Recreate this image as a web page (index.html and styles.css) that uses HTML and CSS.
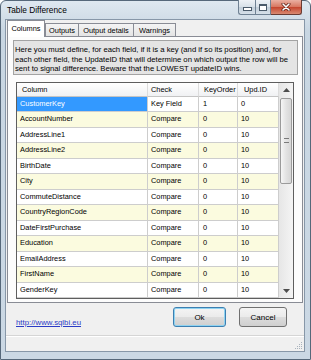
FILE: index.html
```html
<!DOCTYPE html>
<html lang="en">
  <head>
    <meta charset="UTF-8" />
    <meta name="viewport" content="width=device-width, initial-scale=1.0" />
    <title>Table Difference</title>
    <link rel="stylesheet" href="styles.css">
  </head>

  <body>
    <div class="window">
      <div class="titlebar">
        <span class="title">Table Difference</span>
        <div class="caption-buttons">
          <span class="cap-btn cap-min"><i></i></span>
          <span class="cap-btn cap-max"><i></i></span>
          <span class="cap-btn cap-close">
            <svg width="10" height="8" viewBox="0 0 10 8">
              <path d="M2 1 L8 7 M8 1 L2 7" stroke="#5a1a10" stroke-width="3" stroke-linecap="round" />
              <path d="M2 1 L8 7 M8 1 L2 7" stroke="#ffffff" stroke-width="1.6" stroke-linecap="round" />
            </svg>
          </span>
        </div>
      </div>

      <div class="client">
        <div class="tabs">
          <div class="tab selected">Columns</div>
          <div class="tab tab-outputs">Outputs</div>
          <div class="tab tab-details">Output details</div>
          <div class="tab tab-warnings">Warnings</div>
        </div>

        <div class="tab-page">
          <div class="description">
            Here you must define, for each field, if it is a key (and if so its position) and, for<br>
            each other field, the UpdateID that will determine on which output the row will be<br>
            sent to signal difference. Beware that the LOWEST updateID wins.
          </div>

          <div class="grid">
            <div class="grid-body">
              <div class="grid-row header">
                <div class="h-col">Column</div>
                <div class="h-check">Check</div>
                <div class="h-key">KeyOrder</div>
                <div class="h-upd">Upd.ID</div>
              </div>
              <div class="grid-row">
                <div class="cell-selected">CustomerKey</div><div>Key Field</div><div class="num">1</div><div>0</div>
              </div>
              <div class="grid-row alt">
                <div>AccountNumber</div><div>Compare</div><div class="num">0</div><div>10</div>
              </div>
              <div class="grid-row">
                <div>AddressLine1</div><div>Compare</div><div class="num">0</div><div>10</div>
              </div>
              <div class="grid-row alt">
                <div>AddressLine2</div><div>Compare</div><div class="num">0</div><div>10</div>
              </div>
              <div class="grid-row">
                <div>BirthDate</div><div>Compare</div><div class="num">0</div><div>10</div>
              </div>
              <div class="grid-row alt">
                <div>City</div><div>Compare</div><div class="num">0</div><div>10</div>
              </div>
              <div class="grid-row">
                <div>CommuteDistance</div><div>Compare</div><div class="num">0</div><div>10</div>
              </div>
              <div class="grid-row alt">
                <div>CountryRegionCode</div><div>Compare</div><div class="num">0</div><div>10</div>
              </div>
              <div class="grid-row">
                <div>DateFirstPurchase</div><div>Compare</div><div class="num">0</div><div>10</div>
              </div>
              <div class="grid-row alt">
                <div>Education</div><div>Compare</div><div class="num">0</div><div>10</div>
              </div>
              <div class="grid-row">
                <div>EmailAddress</div><div>Compare</div><div class="num">0</div><div>10</div>
              </div>
              <div class="grid-row alt">
                <div>FirstName</div><div>Compare</div><div class="num">0</div><div>10</div>
              </div>
              <div class="grid-row">
                <div>GenderKey</div><div>Compare</div><div class="num">0</div><div>10</div>
              </div>
            </div>

            <div class="scrollbar">
              <div class="scroll-arrow">
                <svg width="7" height="4" viewBox="0 0 7 4"><path d="M0 4 L3.5 0 L7 4 Z" fill="#4d4d4d" /></svg>
              </div>
              <div class="scroll-thumb">
                <span class="grip-lines"></span>
              </div>
              <div class="scroll-track"></div>
              <div class="scroll-arrow">
                <svg width="7" height="4" viewBox="0 0 7 4"><path d="M0 0 L3.5 4 L7 0 Z" fill="#4d4d4d" /></svg>
              </div>
            </div>
          </div>
        </div>

        <div class="footer">
          <a class="site-link" href="#">http://www.sqlbi.eu</a>
          <div class="buttons">
            <button class="btn btn-default">Ok</button>
            <button class="btn btn-cancel">Cancel</button>
          </div>
        </div>

        <div class="statusbar">
          <svg class="size-grip" width="9" height="9" viewBox="0 0 9 9">
            <rect x="7" y="1" width="1" height="1" fill="#a9b3bd" />
            <rect x="5" y="3" width="1" height="1" fill="#a9b3bd" />
            <rect x="7" y="3" width="1" height="1" fill="#a9b3bd" />
            <rect x="3" y="5" width="1" height="1" fill="#a9b3bd" />
            <rect x="5" y="5" width="1" height="1" fill="#a9b3bd" />
            <rect x="7" y="5" width="1" height="1" fill="#a9b3bd" />
            <rect x="1" y="7" width="1" height="1" fill="#a9b3bd" />
            <rect x="3" y="7" width="1" height="1" fill="#a9b3bd" />
            <rect x="5" y="7" width="1" height="1" fill="#a9b3bd" />
            <rect x="7" y="7" width="1" height="1" fill="#a9b3bd" />
          </svg>
        </div>
      </div>
    </div>
  </body>
</html>
```

FILE: styles.css
```css
body {
  margin: 0;
  background: #ffffff;
  font-family: "Liberation Sans", Arial, sans-serif;
  font-size: 7.4px;
  color: #000000;
}

.window {
  width: 311px;
  height: 360px;
  box-sizing: border-box;
  border: 1px solid #56687a;
  border-radius: 6px 6px 0 0;
  padding: 0 5px 7px 4px;
  background: linear-gradient(#dfe8f0, #c8d6e2 30px, #cbd8e4);
  display: flex;
  flex-direction: column;
}

.titlebar {
  height: 18px;
  display: flex;
  align-items: flex-start;
}

.title {
  font-size: 8.3px;
  padding: 4px 0 0 2px;
}

.caption-buttons {
  margin-left: auto;
  margin-right: 3px;
  margin-top: -1px;
  display: flex;
}

.cap-btn {
  height: 15px;
  box-sizing: border-box;
  border: 1px solid #6f8193;
  border-top: none;
  display: flex;
  align-items: center;
  justify-content: center;
  background: linear-gradient(#eef2f6, #d7e0e8 50%, #c1cdd8 50%, #d6e0e9);
}

.cap-min {
  width: 17px;
  border-radius: 0 0 0 3px;
  border-right: none;
}

.cap-max {
  width: 16px;
}

.cap-close {
  width: 31px;
  border-left: none;
  border-color: #6a3b33;
  border-radius: 0 0 3px 0;
  background: linear-gradient(#eab0a2, #d7755f 50%, #c4432c 50%, #d98a72);
}

.cap-min i {
  display: block;
  width: 7px;
  height: 2px;
  border: 1px solid #4b5b6b;
  background: #ffffff;
  margin-top: 4px;
}

.cap-max i {
  display: block;
  width: 6px;
  height: 4px;
  border: 1px solid #4b5b6b;
  border-top-width: 2px;
  background: #ffffff;
}

.client {
  flex: 1;
  border: 1px solid #8797a8;
  background: #f0f0f0;
  display: flex;
  flex-direction: column;
}

.tabs {
  height: 16px;
  display: flex;
  align-items: flex-end;
  padding-left: 2px;
}

.tab {
  height: 13px;
  line-height: 13px;
  box-sizing: border-box;
  border: 1px solid #898c95;
  border-bottom: none;
  background: linear-gradient(#f4f4f4, #e4e4e4);
  text-align: center;
  white-space: nowrap;
}

.tab.selected {
  width: 38px;
  height: 17px;
  line-height: 15px;
  margin-left: -1px;
  margin-bottom: -1px;
  background: #ffffff;
  position: relative;
  z-index: 1;
}

.tab-outputs {
  width: 34px;
}

.tab-details {
  width: 56px;
  margin-left: -1px;
}

.tab-warnings {
  width: 43px;
  margin-left: -1px;
}

.tab-page {
  height: 267px;
  box-sizing: border-box;
  margin: 0 1px;
  border: 1px solid #898c95;
  background: #fcfcfc;
  padding: 3px 4px 0 5px;
}

.description {
  border: 1px solid #a3a3a3;
  background: #e4e4e4;
  padding: 4px 0 0 1px;
  font-size: 7.7px;
  line-height: 9.5px;
  white-space: nowrap;
  overflow: hidden;
}

.grid {
  margin: 7px 4px 0 3px;
  border: 1px solid #5e5e5e;
  display: flex;
  background: #ffffff;
}

.grid-body {
  width: 262px;
}

.grid-row {
  display: grid;
  grid-template-columns: 131px 51px 39px 41px;
  height: 15.5px;
  line-height: 14.5px;
}

.grid-row > div {
  box-sizing: border-box;
  border-right: 1px solid #cdcdcd;
  border-bottom: 1px solid #cdcdcd;
  padding-left: 3px;
  white-space: nowrap;
  overflow: hidden;
}

.grid-row > div.num {
  padding-left: 4px;
}

.grid-row.alt > div {
  background: #fbfbdf;
}

.grid-row > div.cell-selected {
  background: #3399ff;
  color: #ffffff;
}

.grid-row.header {
  height: 14px;
  line-height: 13px;
}

.grid-row.header > div {
  background: linear-gradient(#ffffff, #f0f1f3);
  border-right-color: #dcdcdc;
  border-bottom-color: #c4c4c4;
}

.grid-row.header > .h-col {
  padding-left: 5px;
}

.grid-row.header > .h-check {
  padding-left: 3px;
}

.grid-row.header > .h-key {
  padding-left: 5px;
}

.grid-row.header > .h-upd {
  padding-left: 6px;
}

.scrollbar {
  width: 14px;
  display: flex;
  flex-direction: column;
  background: linear-gradient(90deg, #e6e6e6, #f4f4f4);
}

.scroll-arrow {
  height: 14px;
  display: flex;
  align-items: center;
  justify-content: center;
}

.scroll-thumb {
  height: 86px;
  margin: 1px 1px 0 1px;
  box-sizing: border-box;
  border: 1px solid #9b9b9b;
  border-radius: 2px;
  background: linear-gradient(90deg, #f6f6f6, #e3e3e3 50%, #d6d6d6);
  display: flex;
  align-items: center;
  justify-content: center;
}

.grip-lines {
  width: 5px;
  height: 3px;
  border-top: 1px solid #7a7a7a;
  border-bottom: 1px solid #7a7a7a;
}

.scroll-track {
  flex: 1;
}

.footer {
  display: flex;
  align-items: flex-end;
  justify-content: space-between;
  padding: 4px 17px 0 10px;
}

.site-link {
  color: #2a3bc6;
  text-decoration: underline;
  font-size: 7.8px;
  line-height: 9px;
}

.buttons {
  display: flex;
  gap: 13px;
}

.btn {
  height: 20px;
  padding: 0;
  box-sizing: border-box;
  border: 1px solid #707070;
  border-radius: 3px;
  background: linear-gradient(#f4f4f4, #ebebeb 48%, #dcdcdc 52%, #cfcfcf);
  font-family: "Liberation Sans", Arial, sans-serif;
  font-size: 8px;
  color: #000000;
}

.btn-default {
  width: 53px;
  border-color: #3c7fb1;
  box-shadow: inset 0 0 0 1px #8fd3f1;
}

.btn-cancel {
  width: 48px;
}

.statusbar {
  flex: 1;
  margin-top: 8px;
  border-top: 1px solid #d5d5d5;
  box-shadow: inset 0 1px 0 #ffffff;
  display: flex;
  justify-content: flex-end;
  align-items: flex-end;
}

.size-grip {
  display: block;
  margin: 0 1px 1px 0;
}
```
